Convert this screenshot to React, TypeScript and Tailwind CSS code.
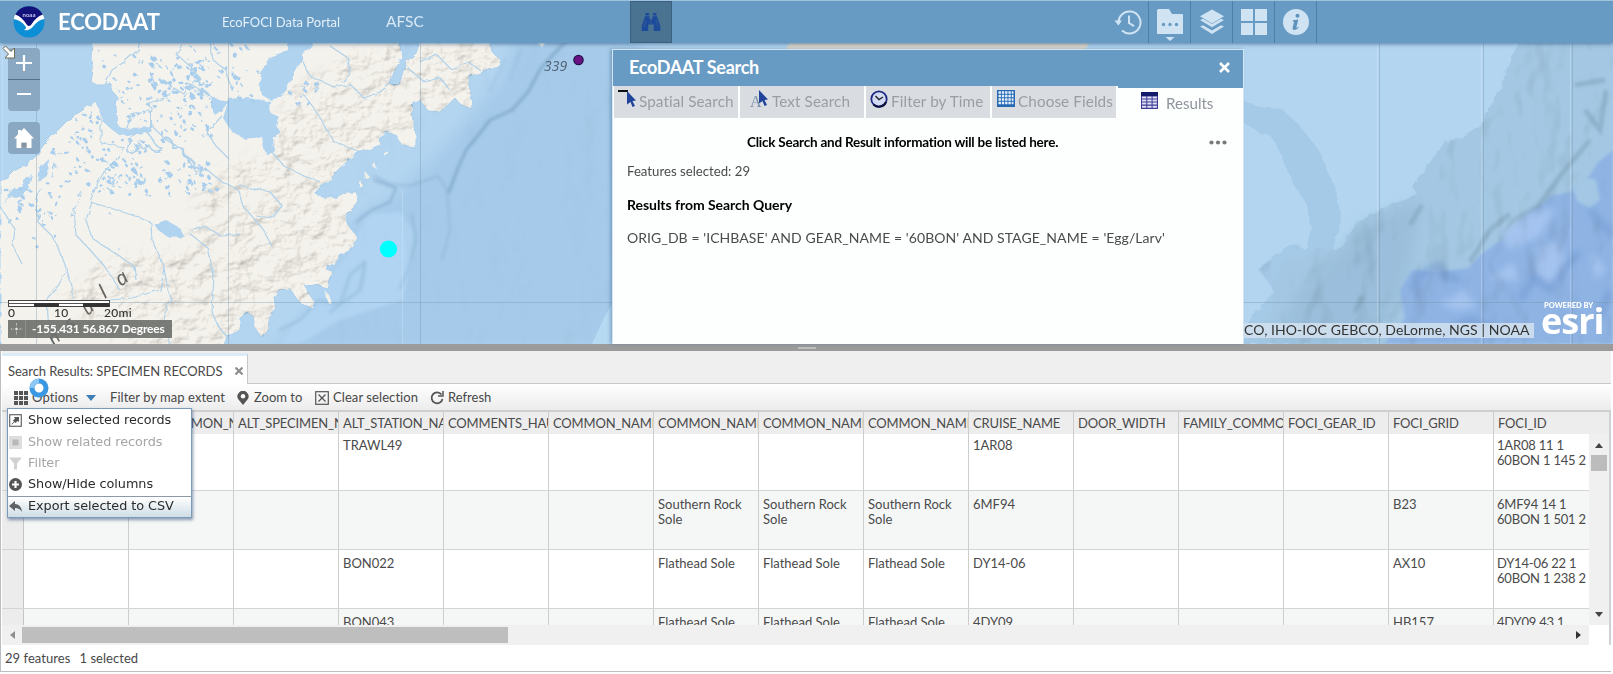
import React from "react";

const COLUMNS = [
  "ALT_COMMENTS",
  "ALT_COMMON_NAME",
  "ALT_SPECIMEN_NAME",
  "ALT_STATION_NAME",
  "COMMENTS_HAUL",
  "COMMON_NAME1",
  "COMMON_NAME2",
  "COMMON_NAME3",
  "COMMON_NAME4",
  "CRUISE_NAME",
  "DOOR_WIDTH",
  "FAMILY_COMMON",
  "FOCI_GEAR_ID",
  "FOCI_GRID",
  "FOCI_ID",
];

const ROWS: string[][] = [
  ["", "", "", "TRAWL49", "", "", "", "", "", "1AR08", "", "", "", "", "1AR08 11 1\n60BON 1 145 2"],
  ["", "", "", "", "", "", "Southern Rock Sole", "Southern Rock Sole", "Southern Rock Sole", "6MF94", "", "", "", "B23", "6MF94 14 1\n60BON 1 501 2"],
  ["", "", "", "BON022", "", "", "Flathead Sole", "Flathead Sole", "Flathead Sole", "DY14-06", "", "", "", "AX10", "DY14-06 22 1\n60BON 1 238 2"],
  ["", "", "", "BON043", "", "", "Flathead Sole", "Flathead Sole", "Flathead Sole", "4DY09", "", "", "", "HB157", "4DY09 43 1"],
];

const LAND =
  "M92 40 L91 60 93 70 91 82 97 85 105 85 110 83 113 92 117 97 116 108 118 127 128 130 138 128 150 131 141 134 126 131 120 135 112 129 104 122 101 112 96 101 88 106 80 112 72 116 60 128 45 143 36 156 27 164 16 170 8 178 0 181 0 350 222 350 227 337 240 330 240 318 248 313 253 316 255 328 262 338 269 330 269 318 276 310 274 297 279 290 290 289 300 303 312 308 315 302 308 292 305 286 316 285 327 288 330 277 334 273 325 268 336 263 340 256 349 251 354 243 357 236 350 228 345 218 351 210 358 204 357 192 346 192 336 197 324 198 316 194 318 187 330 180 338 170 350 159 358 153 368 150 380 145 379 137 387 132 397 136 400 144 416 148 416 135 412 115 413 102 420 100 428 111 440 112 447 106 455 98 461 105 472 109 471 92 468 77 480 73 498 67 501 60 492 52 490 40 421 40 416 53 406 62 399 84 390 84 394 72 402 58 400 40 Z";

const LAKES = [
  "M316 40 L304 54 298 68 291 80 286 91 277 98 270 100 262 95 259 84 262 70 269 58 282 54 288 50 288 40Z",
  "M229 99 L248 97 271 102 270 112 280 118 276 125 281 134 274 138 275 151 267 155 264 149 262 137 245 139 232 132 223 118Z",
  "M212 97 L228 102 223 109 215 115 212 108Z",
  "M154 224 L166 220 180 228 184 237 170 238 158 230Z",
  "M0 206 L14 190 32 174 28 190 20 197 8 198Z",
  "M40 166 L48 158 47 176 38 182Z",
];

const RIVERS = [
  "M150 131 L152 108 146 104 170 96 174 88 184 94 190 84 204 92 212 97",
  "M126 131 L131 115 150 111 152 126 166 140 181 148 196 172 205 168 222 182 238 190 243 206 262 228 272 246",
  "M101 112 L101 143 124 147 116 160 104 172 96 186 90 202 104 206 138 217 151 223 152 240 164 268 160 290 132 298 110 300",
  "M40 188 L36 205 38 222 53 237 64 262 70 280 73 298",
  "M82 192 L74 210 76 235 92 252 106 268 120 290",
  "M92 202 L86 220 92 238 110 250 134 266 136 280",
  "M67 270 L58 286 47 296 48 318 54 348",
  "M164 268 L168 290 172 300 164 312 170 348",
  "M230 160 L216 146 207 132 222 116",
  "M210 42 L213 60 226 70 232 88",
  "M184 42 L176 54 190 66 200 78 188 88",
  "M105 85 L112 70 124 62 138 50 140 40",
  "M303 94 L314 108 324 125 334 142 350 148 360 152",
  "M302 60 L310 76 336 88 350 84 364 98 380 92 390 84",
  "M330 46 L348 58 350 74 342 82",
  "M240 186 L270 192 282 206 272 218 256 216",
  "M190 230 L204 226 222 236 240 234",
  "M190 234 L208 248 214 276 212 312 218 326 234 345",
  "M0 206 L14 228 12 244 22 264",
  "M420 62 L436 54 452 70 468 62 480 70",
  "M408 68 L424 82 440 78 450 90",
  "M270 150 L284 166 304 176 320 182",
];

const PONDS: { x: number; y: number; rx: number; ry: number; r: number }[] = (() => {
  let seed = 7;
  const rnd = () => {
    seed = (seed * 16807) % 2147483647;
    return seed / 2147483647;
  };
  const areas: [number, number, number, number, number, number][] = [
    [98, 50, 100, 72, 60, 1.6],
    [150, 58, 60, 40, 58, 2.6],
    [185, 44, 75, 60, 42, 2],
    [125, 96, 90, 46, 40, 1.6],
    [50, 140, 100, 56, 72, 1.7],
    [102, 158, 40, 30, 30, 2.8],
    [0, 180, 62, 46, 24, 2.2],
    [160, 160, 60, 34, 38, 2.2],
    [290, 76, 34, 28, 12, 2],
    [70, 112, 30, 30, 20, 1.7],
    [20, 210, 120, 60, 10, 1.3],
  ];
  return areas.flatMap(([x, y, w, h, n, s]) =>
    Array.from({ length: n }, () => ({
      x: x + rnd() * w,
      y: y + rnd() * h,
      rx: 0.7 + rnd() * s,
      ry: 0.6 + rnd() * s * 0.8,
      r: rnd() * 180,
    }))
  );
})();

function MapCanvas() {
  return (
    <svg className="absolute inset-0" width="1613" height="302" viewBox="0 42 1613 302">
      <defs>
        <filter id="relief" x="0" y="0" width="100%" height="100%" colorInterpolationFilters="sRGB">
          <feTurbulence type="fractalNoise" baseFrequency="0.045 0.06" numOctaves="4" seed="4" />
          <feDiffuseLighting surfaceScale="4" diffuseConstant="1.13" lightingColor="#fffdfa">
            <feDistantLight azimuth="225" elevation="62" />
          </feDiffuseLighting>
        </filter>
        <filter id="seabed" x="0" y="0" width="100%" height="100%" colorInterpolationFilters="sRGB">
          <feTurbulence type="fractalNoise" baseFrequency="0.022 0.016" numOctaves="3" seed="9" />
          <feDiffuseLighting surfaceScale="8" diffuseConstant="1.17" lightingColor="#ffffff">
            <feDistantLight azimuth="200" elevation="60" />
          </feDiffuseLighting>
        </filter>
        <filter id="rough" x="-5%" y="-5%" width="110%" height="110%">
          <feTurbulence type="fractalNoise" baseFrequency="0.12" numOctaves="2" seed="2" />
          <feDisplacementMap in="SourceGraphic" scale="5" />
        </filter>
        <filter id="soft" x="-20%" y="-20%" width="140%" height="140%">
          <feGaussianBlur stdDeviation="7" />
        </filter>
        <filter id="soft2" x="-20%" y="-20%" width="140%" height="140%">
          <feGaussianBlur stdDeviation="1.5" />
        </filter>
        <filter id="soft3" x="-30%" y="-30%" width="160%" height="160%">
          <feGaussianBlur stdDeviation="3.5" />
        </filter>
        <clipPath id="landClip">
          <path d={LAND} />
        </clipPath>
        <clipPath id="deepClip">
          <path d="M1518 42 L1500 90 1480 125 1460 138 1445 142 1412 186 1418 195 1385 207 1358 222 1342 245 1330 251 1295 243 1260 268 1273 290 1273 310 1240 344 1613 344 1613 42Z" />
        </clipPath>
        <mask id="hills">
          <g filter="url(#soft)" fill="#fff">
            <path d="M290 90 L380 40 510 40 480 120 370 150 330 200 370 210 350 300 230 350 120 350 60 300 100 260 190 250 200 180 270 150Z" />
          </g>
        </mask>
      </defs>
      <rect x="0" y="42" width="1613" height="302" fill="#b3d5f0" />
      <path d="M516 40 L500 80 440 150 400 190 345 230 330 290 270 350 640 350 640 40Z" fill="#a6cbea" filter="url(#soft)" />
      <path d="M365 215 L400 212 413 230 412 262 402 300 340 320 300 344 280 344 320 290 350 250Z" fill="#b0d4f2" filter="url(#soft2)" />
      <path d="M620 290 L604 318 592 344 620 344Z" fill="#b7daf3" />
      <g fill="none" stroke="#86adcf" filter="url(#soft2)" strokeLinecap="round" strokeLinejoin="round">
        <path d="M565 42 L541 68 528 92 512 110 490 120 476 138 466 150 458 168 449 192" strokeWidth="3" />
        <path d="M356 222 L372 210 390 202 396 188 374 180" strokeWidth="2" opacity=".8" />
        <path d="M374 176 L390 184 410 186 438 176 447 190 450 230 442 260" strokeWidth="2" opacity=".5" />
        <path d="M412 215 L416 240 408 270 400 288" strokeWidth="2" opacity=".5" />
        <path d="M280 330 L300 320 318 300 340 305 350 275 365 262 360 290 330 312" strokeWidth="2.500" opacity=".45" />
        <path d="M520 50 L510 80 M505 60 L490 90" strokeWidth="2" opacity=".3" />
      </g>
      <rect x="300" y="42" width="312" height="302" filter="url(#seabed)" className="opacity-5 mix-blend-multiply" />
      <g filter="url(#rough)">
        <path d={LAND} fill="#f4f2ec" stroke="#a9cfee" strokeWidth="1" />
      </g>
      <g clipPath="url(#landClip)" className="opacity-40 mix-blend-multiply">
        <g mask="url(#hills)">
          <rect x="0" y="42" width="520" height="302" filter="url(#relief)" />
        </g>
      </g>
      <g filter="url(#rough)">
        {LAKES.map((d, i) => (
          <path key={i} d={d} fill="#b0d3f0" />
        ))}
        <g clipPath="url(#landClip)" fill="#a9ceed">
          {PONDS.map((p, i) => (
            <ellipse key={i} cx={p.x} cy={p.y} rx={p.rx} ry={p.ry} transform={`rotate(${p.r} ${p.x} ${p.y})`} />
          ))}
        </g>
        <g fill="none" stroke="#b1d2ea" strokeWidth="1.2" strokeLinejoin="round">
          {RIVERS.map((d, i) => (
            <path key={i} d={d} />
          ))}
          <path d="M128 153 q-1 -16 9 -20 q10 -4 14 4 q6 12 12 12 q-10 6 -14 -4 q-6 8 -10 -2 q-4 10 -11 10" strokeWidth="1.6" />
          <path d="M164 138 q10 0 8 10 q14 -4 12 8 q12 4 10 12 q8 -2 6 8" strokeWidth="2" />
        </g>
        <path d="M118 133 L128 136 140 133 152 131 150 127 130 129 118 126Z" fill="#b3d5f0" />
        <path d="M384 154 l3 -3 1 2 -3 4z M372 166 l2 -4 2 6z M364 178 l2 -6 3 5z M359 188 l2 -7 2 5z M324 290 l5 5 3 8 -3 1z M537 42 h9 l-4 5z" fill="#f3f1ea" />
      </g>
      <path d="M790 42h300l-4 7h-300z" fill="#ddd9cc" />

      <path d="M1240 99 L1260 107 1282 109 1300 126 1320 152 1335 188 1338 202 1341 220 1333 250 1340 252 1345 242 1340 344 1230 344 1275 290 1258 270 1270 258 1292 243 1306 250 1311 228 1307 205 1293 183 1279 150 1271 136 1261 134 1240 120Z" fill="#a5cae8" filter="url(#rough)" />
      <path d="M1518 42 L1500 90 1480 125 1460 138 1445 142 1412 186 1418 195 1385 207 1358 222 1342 245 1330 252 1280 262 1273 290 1273 310 1240 344 1613 344 1613 42Z" fill="#a4c8e3" filter="url(#rough)" />
      <path d="M1360 225 L1420 200 1410 262 1400 300 1370 344 1270 344 1300 290 1340 250Z" fill="#94b9d6" opacity=".6" filter="url(#soft)" />
      <path d="M1613 150 L1598 162 1590 175 1570 192 1550 196 1520 220 1506 236 1480 255 1468 268 1440 272 1412 270 1400 290 1405 318 1385 344 1613 344Z" fill="#8fb4e4" filter="url(#soft2)" />
      <path d="M1573 190 L1582 176 1596 180 1600 200 1590 208 1578 202Z" fill="#a3c7e4" filter="url(#soft2)" />
      <g fill="none" stroke="#6f96cf" strokeWidth="7" filter="url(#soft3)" opacity=".6">
        <path d="M1412 290 L1420 275 1438 265 1446 276 1460 280 M1520 300 L1535 275 1550 290 1562 268 1580 252 M1590 210 L1612 235 M1610 290 L1600 316 M1440 335 L1470 320 1500 330" />
      </g>
      <g fill="none" stroke="#7d9fb6" strokeWidth="5" filter="url(#soft2)" opacity=".5">
        <path d="M1500 240 L1512 222 1538 206 1560 176 1590 140 M1355 312 L1362 296 M1410 225 L1422 205 M1470 262 L1490 230 1510 214 M1585 110 L1600 130 1606 90 M1575 85 L1605 80" />
      </g>
      <g fill="#aac8f2" filter="url(#soft3)" opacity=".8">
        <path d="M1440 304 L1466 290 1476 308 1455 310Z M1500 232 L1530 214 1555 208 1540 236 1510 250Z M1540 250 L1556 240 1566 260 1550 284 1535 270Z M1590 250 L1606 270 1596 280Z M1490 280 L1512 262 1520 280Z" />
      </g>
      <g clipPath="url(#deepClip)" className="opacity-20 mix-blend-multiply">
        <rect x="1240" y="42" width="373" height="302" filter="url(#seabed)" />
      </g>

      <path d="M36.5 42V344 M228.5 42V344 M420.5 42V344 M1379.5 42V344 M1483.5 42V344 M1572.5 42V344 M0 302.5H612 M1243 302.5H1613" stroke="#6c8ba3" strokeOpacity=".35" />
      <path d="M2.5 42V344 M402.5 190V344 M1377.5 42V344 M1481.5 42V344 M1570.5 42V344" stroke="#fff" strokeOpacity=".2" />

      <g fill="#66645f" fontFamily="'Noto Sans', sans-serif" fontSize="18" fontStyle="italic">
        <text transform="translate(121 287) rotate(-38)" fontSize="20">a</text>
        <text transform="translate(105 299) rotate(-38)" fontSize="20">l</text>
        <text transform="translate(88 316) rotate(-42)">u</text>
        <text transform="translate(71 330) rotate(-42)">s</text>
        <text transform="translate(54 346) rotate(-42)">n</text>
        <text x="544" y="71" fontSize="14" fill="#55667a">339</text>
      </g>
      <circle cx="578.5" cy="60" r="4.6" fill="#6a1083" stroke="#25134f" strokeWidth="1.4" />
      <circle cx="388.5" cy="249" r="8.6" fill="#00ffff" />
    </svg>
  );
}

function NoaaLogo() {
  return (
    <svg width="32" height="32" viewBox="0 0 32 32" className="ml-[13px] shrink-0">
      <circle cx="16" cy="16" r="15.5" fill="#0d8fd6" />
      <path d="M2 9 A15.5 15.5 0 0 1 30 9 Q24 15 20 20 Q17 24 14 20 Q9 13 2 9Z" fill="#12137a" />
      <path d="M0.8 13 Q1.2 10 2.3 8.6 Q9 11 14 19 Q16 21 18 19 Q23 11 29.8 8.6 Q31 11 31.3 13 Q25 14 20.5 20 Q17 25 11 24 Q13.5 23 13 21 Q8 14 0.8 13Z" fill="#fff" />
      <text x="16" y="11.3" fontSize="6" fontWeight="700" textAnchor="middle" fill="#c5c5ee" fontFamily="Lato, sans-serif">noaa</text>
    </svg>
  );
}

function Binoculars() {
  return (
    <svg width="20" height="20" viewBox="0 0 20 20" fill="#1d4b9c">
      <path d="M4.500 1h3.600v2.500H4.500zM11.900 1h3.600v2.500h-3.600zM4 4.300h4.600v3h2.800v-3H16L19.300 14v5h-6.500v-6.500H7.200V19H.7v-5z" />
      <path d="M4.500 8L3 15M15.500 8L17 15M9.900 7v5" stroke="#3a5f8e" strokeWidth=".8" />
    </svg>
  );
}

function HistoryIcon() {
  return (
    <svg width="28" height="28" viewBox="0 0 28 28" fill="none" stroke="#cfe3f3" strokeWidth="2">
      <path d="M4.600 16 A11 11 0 1 1 8 22.500" />
      <path d="M0.500 12.500h7.500l-3.600 5z" fill="#cfe3f3" stroke="none" />
      <path d="M15 7.500V15l5 3.200" />
    </svg>
  );
}

function FolderIcon() {
  return (
    <svg width="26" height="34" viewBox="0 0 26 34" fill="#cfe3f3">
      <path d="M0 2.500A1.500 1.500 0 0 1 1.500 1H12l3 5h10a1 1 0 0 1 1 1v19H0z" />
      <g fill="#679bc4">
        <circle cx="6.500" cy="16.500" r="1.700" />
        <circle cx="13" cy="16.500" r="1.700" />
        <circle cx="19.500" cy="16.500" r="1.700" />
      </g>
      <path d="M8.500 29h9l-4.500 4z" />
    </svg>
  );
}

function LayersIcon() {
  return (
    <svg width="26" height="26" viewBox="0 0 26 26" fill="#cfe3f3">
      <path d="M13 0.500 25 7.300 13 14.500 1 7.300z" />
      <path d="M1 11l3-1.200 9 5.200 9-5.200 3 1.200-12 7.300z M1 17.500l3-1.200 9 5.200 9-5.200 3 1.200-12 7.500z" />
    </svg>
  );
}

function GridIcon() {
  return (
    <svg width="26" height="26" viewBox="0 0 26 26" fill="#cfe3f3">
      <path d="M0 0h12v12H0zM14 0h12v12H14zM0 14h12v12H0zM14 14h12v12H14z" />
    </svg>
  );
}

function InfoIcon() {
  return (
    <svg width="26" height="26" viewBox="0 0 26 26">
      <circle cx="13" cy="13" r="13" fill="#cfe3f3" />
      <circle cx="14.500" cy="6.700" r="2" fill="#5d93bd" />
      <path d="M10 11.300l5.300-.8-2 8.200q.8.200 2-.7l.4.700q-2.700 2.500-5 2.300-1.600-.5-1.100-2.500l1.500-5.500-1.300-.6z" fill="#5d93bd" />
    </svg>
  );
}

function Cursor({ className }: { className?: string }) {
  return (
    <svg width="10" height="16" viewBox="0 0 10 16" className={className}>
      <path d="M1 0L10 9.500 6.500 10 9 15 6.500 16 4.500 11 1 13.500z" fill="#21449b" />
    </svg>
  );
}

function SpatialIcon() {
  return (
    <span className="relative block h-[18px] w-[18px]">
      <span className="absolute left-0 top-0 h-[2px] w-[10px] bg-[#111]" />
      <Cursor className="absolute left-[8px] top-px" />
    </span>
  );
}

function TextIcon() {
  return (
    <span className="relative block h-[18px] w-[18px] font-['Liberation_Serif',serif] text-[16px] leading-[24px] text-[#7c8fa8]">
      A<Cursor className="absolute left-[8px] top-0" />
    </span>
  );
}

function ClockIcon() {
  return (
    <svg width="18" height="18" viewBox="0 0 18 18">
      <circle cx="9" cy="9" r="7.700" fill="#d2daf4" stroke="#20297f" strokeWidth="1.800" />
      <path d="M3.500 14.500A7.700 7.700 0 0 0 16 12" fill="none" stroke="#0c0f3c" strokeWidth="2" />
      <path d="M5.500 6l3.500 3.500L13 7" fill="none" stroke="#222" strokeWidth="1.400" />
    </svg>
  );
}

function FieldsIcon() {
  return (
    <svg width="18" height="17" viewBox="0 0 18 17">
      <rect width="18" height="17" fill="#2568b4" />
      <path d="M1.500 2.500h15M1.500 6h15M1.500 9.500h15M1.500 13h15" stroke="#e4f0fb" strokeWidth="2.300" strokeDasharray="2.400 0.900" />
    </svg>
  );
}

function ResultsIcon() {
  return (
    <svg width="17" height="17" viewBox="0 0 17 17">
      <rect width="17" height="17" fill="#3c3a94" />
      <rect width="17" height="4" fill="#141a6a" />
      <path d="M1 5.500h15M1 8.500h15M1 11.500h15M1 14.700h15" stroke="#e2e2f6" strokeWidth="1.900" strokeDasharray="4.300 1" />
    </svg>
  );
}

function SearchTab({ icon, label, className = "" }: { icon: React.ReactNode; label: string; className?: string }) {
  return (
    <div className={`flex h-[32px] w-[124px] shrink-0 bg-[#d9dde2] pt-[4px] ${className}`}>
      {icon}
      <span className="mt-[1px] whitespace-nowrap text-[15.300px] leading-[20px] tracking-[0.08px] text-[#9a9da1]">{label}</span>
    </div>
  );
}

function SearchPanel() {
  return (
    <section className="absolute left-[612px] top-[49px] flex h-[295px] w-[632px] flex-col border-x border-t border-[#d4e6f4] bg-[#fdfefe] shadow-[-2px_0_3px_rgba(70,110,150,0.45)]">
      <header className="flex h-[36px] shrink-0 items-center justify-between bg-[#679bc4] pb-[2px] pl-[16px] pr-[13px]">
        <h2 className="text-[18px] font-bold leading-none tracking-[-0.3px] text-white">EcoDAAT Search</h2>
        <svg width="11" height="11" viewBox="0 0 11 11" stroke="#fff" strokeWidth="2.600">
          <path d="M1 1l9 9M10 1l-9 9" />
        </svg>
      </header>
      <div className="flex shrink-0 gap-[2px] pl-px">
        <SearchTab icon={<SpatialIcon />} label="Spatial Search" className="gap-[3px] pl-[4px]" />
        <SearchTab icon={<TextIcon />} label="Text Search" className="gap-[4px] pl-[10px]" />
        <SearchTab icon={<ClockIcon />} label="Filter by Time" className="gap-[3px] pl-[4px]" />
        <SearchTab icon={<FieldsIcon />} label="Choose Fields" className="gap-[3px] pl-[5px]" />
        <div className="flex flex-1 gap-[8px] border-t-2 border-[#679bc4] pl-[23px] pt-[4px]">
          <ResultsIcon />
          <span className="mt-[1px] text-[15.100px] leading-[20px] text-[#8e959c]">Results</span>
        </div>
      </div>
      <div className="flex items-center justify-between pl-[134px] pr-[16px] pt-[14px]">
        <p className="text-[13.500px] font-bold leading-[20px] tracking-[-0.23px] text-black">Click Search and Result information will be listed here.</p>
        <svg width="18" height="5" viewBox="0 0 18 5" fill="#77797b">
          <circle cx="2.500" cy="2.500" r="2.100" />
          <circle cx="9" cy="2.500" r="2.100" />
          <circle cx="15.500" cy="2.500" r="2.100" />
        </svg>
      </div>
      <p className="pl-[14px] pt-[9px] text-[13.200px] leading-[20px] text-[#4b4b4b]">Features selected: 29</p>
      <p className="pl-[14px] pt-[14px] text-[14px] font-bold leading-[20px] tracking-[-0.04px] text-black">Results from Search Query</p>
      <p className="whitespace-nowrap pl-[14px] pt-[13px] text-[14px] leading-[20px] tracking-[0.07px] text-[#4b4b4b]">
        ORIG_DB = 'ICHBASE' AND GEAR_NAME = '60BON' AND STAGE_NAME = 'Egg/Larv'
      </p>
    </section>
  );
}

function MapWidgets() {
  return (
    <>
      <div className="absolute left-[8px] top-[48px] flex w-[32px] flex-col overflow-hidden rounded-[4px] bg-[#8ba8c3]">
        <div className="flex h-[32px] items-center justify-center border-b border-[#56708a] pb-[2px]">
          <svg width="16" height="16" viewBox="0 0 16 16" stroke="#fff" strokeWidth="2.200"><path d="M8 0v16M0 8h16" /></svg>
        </div>
        <div className="flex h-[31px] items-center justify-center pb-[2px]">
          <svg width="14" height="14" viewBox="0 0 14 14" stroke="#fff" strokeWidth="2.200"><path d="M0 6h14" /></svg>
        </div>
      </div>
      <div className="absolute left-[8px] top-[122px] flex h-[32px] w-[32px] items-center justify-center rounded-[4px] bg-[#8ba8c3]">
        <svg width="20" height="20" viewBox="0 0 20 20" fill="#fff">
          <path d="M10 0L20 10.500H17.500V20H12.500V14.500H7.500V20H2.500V10.500H0L4 6.300V2h3v1.200z" />
          <path d="M7.500 15h5v4.500h-5z" fill="#8a949f" />
        </svg>
      </div>
      <svg width="15" height="15" viewBox="0 0 15 15" className="absolute left-[2px] top-[45px]">
        <path d="M1 3.500L3.500 1 9 6.500 12.500 3V13H3L6.500 9z" fill="#fff" stroke="#6f6a55" strokeWidth="1" />
      </svg>
      <div className="absolute left-[8px] top-[300px] flex flex-col">
        <svg width="102" height="7" viewBox="0 0 102 7">
          <rect x=".5" y=".5" width="101" height="6" fill="#fff" stroke="#444" />
          <path d="M0 3.500h102" stroke="#555" />
          <path d="M26 3h25v4H26zM75 3h26v4H75z" fill="#333" />
        </svg>
        <div className="-mt-px flex text-[12px] font-medium leading-[14px] tracking-[0.3px] text-[#333]">
          <span className="w-[46px]">0</span>
          <span className="w-[50px]">10</span>
          <span>20mi</span>
        </div>
      </div>
      <div className="absolute left-[8px] top-[320px] flex h-[18px] w-[164px] items-center bg-[#6d6f6c]/90 text-[12px] font-bold text-white">
        <svg width="18" height="18" viewBox="0 0 18 18" stroke="#d8ded8" fill="none" className="border-r border-[#8e908d]">
          <path d="M9 3v3M9 12v3M3 9h3M12 9h3" strokeDasharray="1.500 1" />
          <circle cx="9" cy="9" r="1" fill="#fff" />
        </svg>
        <span className="whitespace-nowrap pl-[6px] tracking-[-0.18px]">-155.431 56.867 Degrees</span>
      </div>
      <div className="absolute left-[1244px] top-[323px] h-[15px] w-[290px] bg-[#d3e2ef]/85 text-[14px] leading-[14px] tracking-[0.07px] text-[#333]">
        <span className="whitespace-nowrap">CO, IHO-IOC GEBCO, DeLorme, NGS | NOAA</span>
      </div>
      <div className="absolute left-[1541px] top-[302px] w-[68px] text-white">
        <div className="whitespace-nowrap pl-[3px] text-[7.500px] font-black leading-[8px]">POWERED BY</div>
        <div className="-mt-[5px] font-['Open_Sans',sans-serif] text-[36px] font-bold leading-[32px] tracking-[-1px]">esri</div>
      </div>
    </>
  );
}

function TopBar() {
  const cells = [<FolderIcon />, <LayersIcon />, <GridIcon />, <InfoIcon />];
  return (
    <header className="relative z-10 flex h-[43px] items-center border-t border-[#9fc3dc] bg-[#679bc4] shadow-[0_1px_4px_rgba(50,90,130,0.7)]">
      <NoaaLogo />
      <h1 className="ml-[13px] w-[164px] text-[22px] font-bold leading-none tracking-[-0.15px] text-white">ECODAAT</h1>
      <a className="w-[164px] whitespace-nowrap pt-px text-[13px] text-[#e4f0fa]">EcoFOCI Data Portal</a>
      <a className="w-[244px] text-[15.500px] text-[#d9e9f6]">AFSC</a>
      <div className="flex h-[42px] w-[42px] items-center justify-center border border-[#3b6180] bg-[#4a7391]">
        <Binoculars />
      </div>
      <div className="ml-auto flex h-full">
        <div className="flex w-[42px] items-center justify-center border-r border-[#4c80aa]"><HistoryIcon /></div>
        {cells.map((icon, i) => (
          <div key={i} className={`flex w-[42px] justify-center border-r border-[#4c80aa] ${i === 0 ? "pt-[7px]" : "pt-[8px]"}`}>
            {icon}
          </div>
        ))}
      </div>
      <div className="w-[296px]" />
    </header>
  );
}

const MENU: { label: string; state?: "off" | "hover"; icon: React.ReactNode }[] = [
  {
    label: "Show selected records",
    icon: <><rect x=".7" y=".7" width="11.600" height="11.600" fill="#fff" stroke="#666" strokeWidth="1.200" /><path d="M5 3h5v5L8.500 7 6.500 9 5.500 8 3 10.500 2.500 10 5 7.500 4 6.500 6 4.500z" fill="#555" /></>,
  },
  { label: "Show related records", state: "off", icon: <><rect width="13" height="13" fill="#ddd" /><rect x="3.500" y="3.500" width="6" height="6" fill="#b9b9b9" /></> },
  { label: "Filter", state: "off", icon: <path d="M0 0.500h13L8 6.500V12.500H5V6.500z" fill="#d2d2d2" /> },
  { label: "Show/Hide columns", icon: <><circle cx="6.500" cy="6.500" r="6.500" fill="#555" /><path d="M6.500 3v7M3 6.500h7" stroke="#fff" strokeWidth="2.200" /></> },
  { label: "Export selected to CSV", state: "hover", icon: <path d="M0 6L6 1v3q6 0 7 8-2.500-4-7-4v3z" fill="#5f6264" /> },
];

function OptionsMenu() {
  return (
    <div className="absolute left-[7px] top-[408px] z-10 flex w-[185px] flex-col border border-[#7d9bb8] bg-white pt-px font-['DejaVu_Sans',sans-serif] shadow-[1px_2px_3px_rgba(60,90,130,0.6)]">
      {MENU.map((m) => (
        <div
          key={m.label}
          className={`flex h-[21.400px] items-center gap-[6px] pl-[1px] ${
            m.state === "hover" ? "border-t border-[#8d99a5] bg-linear-to-b from-white to-[#cfdde6]" : ""
          }`}
        >
          <svg width="13" height="13" viewBox="0 0 13 13">{m.icon}</svg>
          <span className={`whitespace-nowrap text-[12.800px] leading-none tracking-[-0.05px] ${m.state === "off" ? "text-[#a5a5a5]" : "text-[#2b2b2b]"}`}>{m.label}</span>
        </div>
      ))}
    </div>
  );
}

function Toolbar() {
  return (
    <div className="flex h-[28px] shrink-0 items-center border-b-2 border-[#cfcfcf] bg-linear-to-b from-white to-[#ececec] pl-[12px] pt-px text-[13px] text-[#484848]">
      <svg width="14" height="14" viewBox="0 0 14 14" fill="#555">
        <path d="M0 0h4v4H0zM5 0h4v4H5zM10 0h4v4h-4zM0 5h4v4H0zM5 5h4v4H5zM10 5h4v4h-4zM0 10h4v4H0zM5 10h4v4H5zM10 10h4v4h-4z" />
      </svg>
      <span className="ml-[4px] w-[54px] tracking-[0.1px]">Options</span>
      <svg width="10" height="6" viewBox="0 0 10 6" fill="#3f7fb8"><path d="M0 0h10L5 6z" /></svg>
      <span className="ml-[14px] w-[127px] whitespace-nowrap tracking-[0.05px]">Filter by map extent</span>
      <svg width="12" height="14" viewBox="0 0 12 14"><path d="M6 14L1.500 8.500A5.500 5.500 0 1 1 10.500 8.500z" fill="#555" /><circle cx="6" cy="5.300" r="2.200" fill="#fff" /></svg>
      <span className="ml-[5px] w-[61px] whitespace-nowrap">Zoom to</span>
      <svg width="14" height="14" viewBox="0 0 14 14" fill="none" stroke="#555"><rect x=".7" y=".7" width="12.600" height="12.600" strokeWidth="1.200" /><path d="M3.500 3.500l7 7M10.500 3.500l-7 7" strokeWidth="1.300" /></svg>
      <span className="ml-[4px] w-[97px] whitespace-nowrap tracking-[0.08px]">Clear selection</span>
      <svg width="14" height="14" viewBox="0 0 14 14" fill="none" stroke="#555" strokeWidth="1.800"><path d="M11.500 3.500A5.500 5.500 0 1 0 12.500 8" /><path d="M13 0v5H8" strokeWidth="1.500" /></svg>
      <span className="ml-[4px]">Refresh</span>
    </div>
  );
}

function RecordsTable() {
  return (
    <div className="flex h-[233px] shrink-0 flex-col border-r-2 border-[#cfd2d4]">
      <div className="flex h-[22px] shrink-0 overflow-hidden bg-[#ededee]">
        <div className="w-[22px] shrink-0 border-r border-[#cdcdcd]" />
        {COLUMNS.map((c) => (
          <div key={c} className="w-[105px] shrink-0 overflow-hidden border-r border-[#cdcdcd] pl-[4px] text-[13px] leading-[22px] tracking-[-0.15px] text-[#4a4a4a] last:border-r-0">
            <span className="whitespace-nowrap">{c}</span>
          </div>
        ))}
      </div>
      <div className="flex h-[191px] shrink-0">
        <div className="flex h-[191px] w-[1587px] shrink-0 flex-col overflow-hidden">
          {ROWS.map((row, r) => (
            <div
              key={r}
              className={`flex w-[1587px] shrink-0 overflow-hidden border-b border-[#d2d4d5] ${r === 0 ? "h-[57px]" : "h-[59px]"} ${r % 2 ? "bg-[#f5f7f7]" : "bg-white"}`}
            >
              <div className="w-[22px] shrink-0 border-r border-[#c6c6c6] bg-[#ececec]" />
              {row.map((cell, i) => (
                <div
                  key={i}
                  className={`w-[105px] shrink-0 whitespace-pre-line border-r border-[#cdcdcd] pl-[4px] pr-[6px] text-[13px] leading-[15px] text-[#4a4a4a] last:w-[95px] last:border-r-0 last:pl-[3px] last:pr-0 last:whitespace-pre last:tracking-[-0.2px] ${r === 0 ? "pt-[4px]" : "pt-[6px]"}`}
                >
                  {cell}
                </div>
              ))}
            </div>
          ))}
        </div>
        <div className="flex flex-1 flex-col items-center bg-[#f0f0f0] pt-[9px]">
          <svg width="8" height="5" viewBox="0 0 8 5" fill="#444"><path d="M0 5h8L4 0z" /></svg>
          <div className="mt-[7px] h-[16px] w-[16px] bg-[#bcbcbc]" />
          <svg width="8" height="5" viewBox="0 0 8 5" fill="#444" className="mb-[8px] mt-auto"><path d="M0 0h8L4 5z" /></svg>
        </div>
      </div>
      <div className="flex h-[20px] w-[1587px] shrink-0 items-center bg-[#f0f0f0] pl-[8px] pr-[8px]">
        <svg width="5" height="8" viewBox="0 0 5 8" fill="#8f8f8f"><path d="M5 0v8L0 4z" /></svg>
        <div className="ml-[7px] h-[16px] w-[486px] bg-[#bebebe]" />
        <svg width="5" height="8" viewBox="0 0 5 8" fill="#333" className="ml-auto"><path d="M0 0v8L5 4z" /></svg>
      </div>
    </div>
  );
}

export default function App() {
  return (
    <div className="relative flex h-[674px] w-[1613px] flex-col overflow-hidden bg-white font-['Lato',sans-serif]">
      <TopBar />
      <main className="relative isolate -mt-[1px] h-[302px] shrink-0">
        <MapCanvas />
      </main>
      <MapWidgets />
      <SearchPanel />
      <div className="flex h-[7px] shrink-0 items-center justify-center bg-[#9b9b9b]">
        <div className="h-[2px] w-[18px] bg-[#bdbdbd]" />
      </div>
      <section className="mr-[2px] flex h-[321px] shrink-0 flex-col border-b border-l border-[#b9bec2] bg-white pl-px">
        <div className="flex h-[33px] shrink-0 bg-[#efefef]">
          <div className="mt-[2px] flex w-[246px] items-center justify-between border-r border-t-[3px] border-[#c8c8c8] border-t-[#dcecf6] bg-white pl-[6px] pr-[4px] pt-[2px]">
            <span className="whitespace-nowrap text-[13px] leading-[18px] tracking-[-0.04px] text-[#484848]">Search Results: SPECIMEN RECORDS</span>
            <svg width="8" height="8" viewBox="0 0 8 8" stroke="#8d8d8d" strokeWidth="2.200"><path d="M.5 .5l7 7M7.500 .5l-7 7" /></svg>
          </div>
          <div className="flex-1 border-b border-[#c8c8c8]" />
        </div>
        <Toolbar />
        <RecordsTable />
        <p className="flex gap-[9px] pl-[3px] pt-[4px] text-[13px] leading-[18px] tracking-[0.05px] text-[#484848]">
          <span>29 features</span>
          <span>1 selected</span>
        </p>
      </section>
      <OptionsMenu />
      <svg width="20" height="20" viewBox="0 0 20 20" className="absolute left-[29px] top-[378px]">
        <circle cx="10" cy="10" r="7" fill="#fff" stroke="#3a97e2" strokeWidth="5" />
        <path d="M10 3A7 7 0 0 0 3 10" fill="none" stroke="#8cc6f2" strokeWidth="5" />
      </svg>
    </div>
  );
}
